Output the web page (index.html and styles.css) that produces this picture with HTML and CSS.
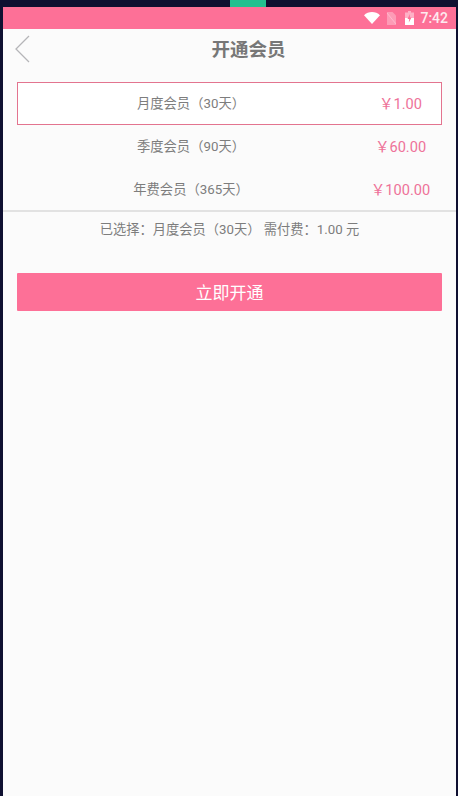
FILE: index.html
```html
<!DOCTYPE html>
<html lang="zh">
<head>
    <meta charset="UTF-8">
    <meta name="viewport" content="width=device-width, initial-scale=1.0">
    <title>开通会员</title>
    <link rel="stylesheet" href="styles.css">
</head>
<body>
    <div class="top-strip"><span class="top-tab"></span></div>

    <div class="phone">
        <div class="status-bar">
            <svg class="icon-wifi" width="16" height="12" viewBox="0 0 16 12">
                <path d="M0 3.2C2.2 1.2 5 0 8 0s5.800 1.200 8 3.200L8 12z" fill="#fff"/>
            </svg>
            <svg class="icon-sim" width="10" height="13" viewBox="0 0 10 13">
                <path d="M1 0h5.500L10 3.500V13H1z" fill="#fff" fill-opacity="0.3"/>
                <path d="M1 1l9 11" stroke="#fff" stroke-opacity="0.3" stroke-width="1"/>
            </svg>
            <svg class="icon-battery" width="9" height="14" viewBox="0 0 9 14">
                <path d="M3 0h3v1.500h3V14H0V1.500h3z" fill="#fff" fill-opacity="0.45"/>
                <path d="M0 7h9v7H0z" fill="#fff"/>
                <path d="M5 3L2.500 8H4.200L3.800 11.500L6.500 6.500H4.800z" fill="#fd7097"/>
            </svg>
            <span class="clock">7:42</span>
        </div>

        <header class="title-bar">
            <svg class="back" width="16" height="28" viewBox="0 0 16 28">
                <path d="M15 1L2 14l13 13" fill="none" stroke="#b5b5b8" stroke-width="1.300"/>
            </svg>
            <h1>开通会员</h1>
        </header>

        <ul class="plans">
            <li class="plan selected">
                <span class="plan-name">月度会员（30天）</span>
                <span class="plan-price">￥1.00</span>
            </li>
            <li class="plan">
                <span class="plan-name">季度会员（90天）</span>
                <span class="plan-price">￥60.00</span>
            </li>
            <li class="plan">
                <span class="plan-name">年费会员（365天）</span>
                <span class="plan-price">￥100.00</span>
            </li>
        </ul>

        <p class="summary">已选择：月度会员（30天） 需付费：1.00 元</p>

        <button class="btn-open">立即开通</button>
    </div>
</body>
</html>
```

FILE: styles.css
```css
:root {
    --pink: #fd7097;
    --price: #ee7299;
    --text: #7d7d7d;
    --dark: #0f1031;
}

* {
    box-sizing: border-box;
}

html, body {
    height: 100%;
}

body {
    margin: 0;
    background: var(--dark);
    font-family: Roboto, "Noto Sans CJK SC", sans-serif;
    color: var(--text);
    display: flex;
    flex-direction: column;
    overflow: hidden;
}

.top-strip {
    height: 7px;
    flex: none;
    padding-left: 230px;
}

.top-tab {
    display: block;
    width: 36px;
    height: 7px;
    background: #22c08f;
}

.phone {
    flex: 1;
    margin: 0 2px 0 3px;
    background: #fbfbfb;
}

.status-bar {
    height: 22px;
    background: var(--pink);
    display: flex;
    align-items: center;
    justify-content: flex-end;
    padding-right: 8px;
    color: #fff;
}

.icon-wifi {
    margin-right: 6px;
}

.icon-sim {
    margin-right: 9px;
}

.icon-battery {
    margin-right: 6px;
}

.clock {
    font-size: 14px;
    font-weight: 500;
    opacity: 0.85;
}

.title-bar {
    height: 40px;
    position: relative;
    display: flex;
    align-items: center;
    justify-content: center;
    padding: 0 0 2px 38px;
}

.back {
    position: absolute;
    left: 11px;
    top: 6px;
}

h1 {
    margin: 0;
    font-size: 18.5px;
    font-weight: 700;
    color: #777;
}

.plans {
    list-style: none;
    margin: 13px 0 0;
    padding: 0 0 0 14px;
    border-bottom: 2px solid #e2e2e2;
}

.plan {
    width: 425px;
    height: 43px;
    display: flex;
    align-items: center;
    border: 1px solid transparent;
    padding-bottom: 2px;
    font-size: 13.3px;
}

.plans .plan:last-child {
    height: 42px;
}

.selected {
    background: #fff;
    border-color: #e3748f;
}

.plan-name {
    width: 346px;
    text-align: center;
}

.plan-price {
    flex: 1;
    padding-right: 4px;
    text-align: center;
    font-size: 14.6px;
    white-space: nowrap;
    color: var(--price);
}

.summary {
    margin: 9px 0 0;
    font-size: 13.25px;
    line-height: 18px;
    text-align: center;
}

.btn-open {
    display: block;
    width: 425px;
    height: 38px;
    margin: 34px 0 0 14px;
    padding-bottom: 3px;
    border: none;
    border-radius: 1px;
    background: var(--pink);
    color: #fff;
    font-family: inherit;
    font-size: 17px;
}
```
